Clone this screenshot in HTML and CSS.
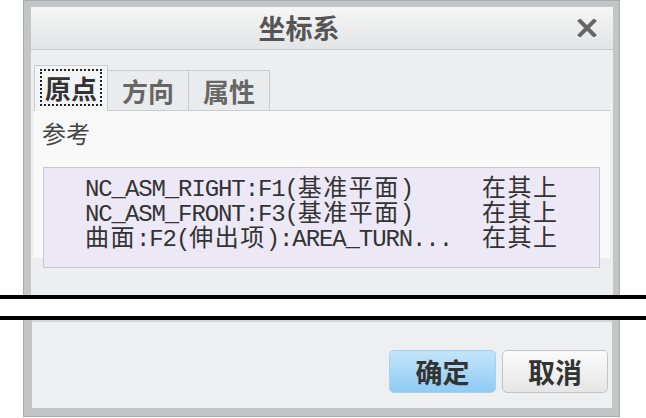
FILE: index.html
```html
<!DOCTYPE html>
<html lang="zh-CN">
<head>
    <meta charset="UTF-8">
    <meta name="viewport" content="width=device-width, initial-scale=1.0">
    <title>坐标系</title>
    <link rel="stylesheet" href="styles.css">
</head>
<body>

    <div class="dialog dialog-top">
        <div class="titlebar">
            <span class="title">坐标系</span>
            <svg class="close" width="20" height="18" viewBox="0 0 20 18">
                <path d="M3 2 L17 16 M17 2 L3 16" stroke="#666" stroke-width="4" stroke-linecap="square"/>
            </svg>
        </div>

        <div class="body">
            <div class="tabs">
                <div class="tab active"><span class="focus">原点</span></div>
                <div class="tab">方向</div>
                <div class="tab">属性</div>
            </div>

            <div class="panel">
                <div class="label">参考</div>
                <div class="refs">
                    <div class="ref">
                        <span class="name">NC_ASM_RIGHT:F1(<span class="cn">基准平面</span>)</span>
                        <span class="state cn">在其上</span>
                    </div>
                    <div class="ref">
                        <span class="name">NC_ASM_FRONT:F3(<span class="cn">基准平面</span>)</span>
                        <span class="state cn">在其上</span>
                    </div>
                    <div class="ref">
                        <span class="name"><span class="cn">曲面</span>:F2(<span class="cn">伸出项</span>):AREA_TURN...</span>
                        <span class="state cn">在其上</span>
                    </div>
                </div>
            </div>
        </div>
    </div>

    <!-- screenshot cut -->
    <div class="cut"></div>

    <div class="dialog dialog-bottom">
        <div class="footer">
            <button class="btn primary">确定</button>
            <button class="btn">取消</button>
        </div>
    </div>

</body>
</html>
```

FILE: styles.css
```css
body {
    margin: 0;
    background: #fff;
    font-family: "Noto Sans CJK SC", sans-serif;
    color: #333;
}

.dialog {
    margin-left: 23px;
    width: 597px;
    box-sizing: border-box;
    background: #c3c5c7;
    box-shadow: inset 1px 0 0 #a9abad, inset -1px 0 0 #a9abad;
}

.dialog-top {
    height: 295px;
    overflow: hidden;
    padding: 7px 7px 0 8px;
    box-shadow: inset 1px 1px 0 #a9abad, inset -1px 0 0 #a9abad;
}

.titlebar {
    display: flex;
    align-items: center;
    height: 42px;
    background: linear-gradient(#f6f6f6, #e3e4e5);
    border-bottom: 1px solid #c9cacc;
}

.title {
    flex: 1;
    text-align: center;
    font-size: 27px;
    font-weight: bold;
    color: #555;
    line-height: 42px;
}

.close {
    margin: 0 16px 0 10px;
}

.body {
    background: #eceef0;
    height: 245px;
    padding-top: 15px;
    box-sizing: border-box;
}

.tabs {
    display: flex;
    align-items: flex-end;
    height: 45px;
    padding-left: 3px;
}

.tab {
    height: 39px;
    line-height: 39px;
    padding: 0 14px;
    font-size: 26px;
    font-weight: bold;
    color: #666;
    background: #eaebed;
    border: 1px solid #cbcccf;
    border-bottom: none;
    border-left: none;
}

.tab.active {
    height: 45px;
    line-height: 44px;
    padding: 0 5px;
    color: #333;
    background: #f3f4f5;
    border-left: 1px solid #cbcccf;
    position: relative;
    z-index: 1;
    margin-bottom: -1px;
}

.focus {
    display: inline-block;
    line-height: 33px;
    padding: 0 3px;
    border: 2px dotted #222;
}

.panel {
    margin-left: 2px;
    margin-right: 3px;
    height: 140px;
    background: #f9f9f9;
    border-top: 1px solid #cbcccf;
    padding: 7px 10px 0 9px;
}

.label {
    font-size: 24px;
    line-height: 30px;
    color: #444;
}

.refs {
    margin-top: 19px;
    margin-left: 1px;
    height: 101px;
    box-sizing: border-box;
    background: #ece8f6;
    border: 1px solid #c9c8d0;
    padding: 5px 0 0 41px;
    font-family: "Liberation Mono", "Noto Sans CJK SC", monospace;
    font-size: 24px;
    letter-spacing: -1.1px;
    color: #333;
}

.ref {
    display: flex;
    height: 25px;
    line-height: 25px;
}

.name {
    width: 397px;
    white-space: nowrap;
}

.cn {
    font-family: "Noto Sans CJK SC", sans-serif;
    letter-spacing: 1.5px;
    font-size: 24px;
}

.cut {
    height: 17px;
    border-top: 4px solid #000;
    border-bottom: 4px solid #000;
    background: #fff;
}

.dialog-bottom {
    height: 97px;
    padding: 0 8px 9px 9px;
    box-shadow: inset 1px 0 0 #a9abad, inset -1px 0 0 #a9abad, inset 0 -1px 0 #a9abad;
}

.footer {
    display: flex;
    justify-content: flex-end;
    gap: 6px;
    height: 88px;
    box-sizing: border-box;
    padding: 28px 4px 0 0;
    background: #eeeff1;
    border-top: 2px solid #d6d7d9;
}

.btn {
    height: 43px;
    width: 106px;
    font-family: "Noto Sans CJK SC", sans-serif;
    font-size: 27px;
    font-weight: bold;
    color: #333;
    border: 1px solid #c4c4c4;
    border-radius: 5px;
    background: linear-gradient(#fbfbfb, #e6e6e6);
    padding: 0;
}

.btn.primary {
    width: 107px;
    border-color: #a6d2ef;
    background: linear-gradient(#c4e5fb, #8ecbf3);
}
```
